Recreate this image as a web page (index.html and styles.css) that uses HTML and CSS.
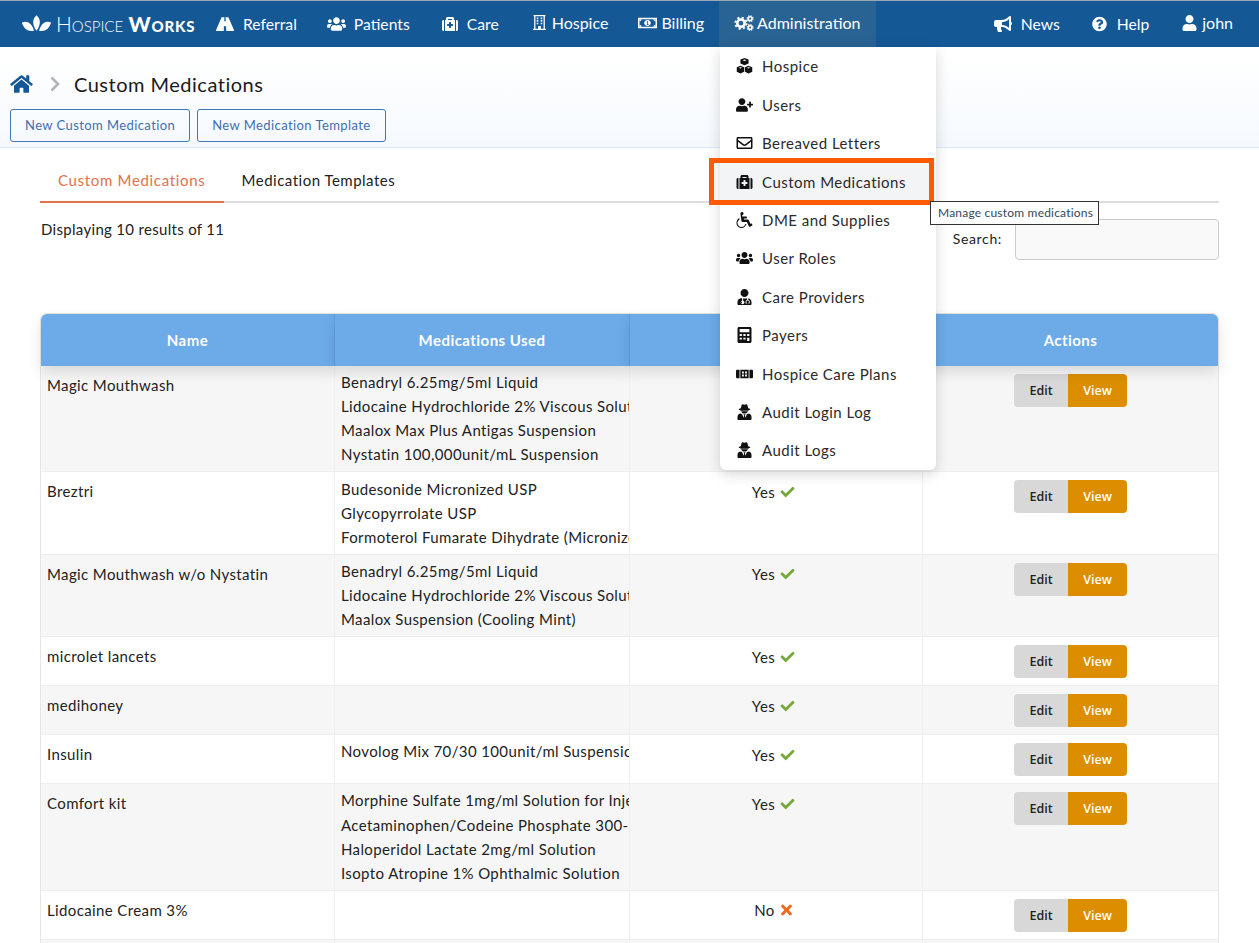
FILE: index.html
```html
<!DOCTYPE html>
<html lang="en">
<head>
<meta charset="utf-8">
<title>Custom Medications</title>
<link rel="stylesheet" href="styles.css">
</head>
<body>
<svg class="defs" width="0" height="0" aria-hidden="true">
  <defs>
    <symbol id="i-home" viewBox="0 0 576 512"><path d="M280.37 148.26L96 300.11V464a16 16 0 0 0 16 16l112.06-.29a16 16 0 0 0 15.92-16V368a16 16 0 0 1 16-16h64a16 16 0 0 1 16 16v95.64a16 16 0 0 0 16 16.05L464 480a16 16 0 0 0 16-16V300L295.67 148.26a12.19 12.19 0 0 0-15.3 0zM571.6 251.47L488 182.56V44.05a12 12 0 0 0-12-12h-56a12 12 0 0 0-12 12v72.61L318.47 43a48 48 0 0 0-61 0L4.34 251.47a12 12 0 0 0-1.6 16.9l25.5 31A12 12 0 0 0 45.15 301l235.22-193.74a12.19 12.19 0 0 1 15.3 0L530.9 301a12 12 0 0 0 16.9-1.6l25.5-31a12 12 0 0 0-1.7-16.93z"/></symbol>
    <symbol id="i-check" viewBox="0 0 512 512"><path d="M173.898 439.404l-166.4-166.4c-9.997-9.997-9.997-26.206 0-36.204l36.203-36.204c9.997-9.998 26.207-9.998 36.204 0L192 312.69 432.095 72.596c9.997-9.997 26.207-9.997 36.204 0l36.203 36.204c9.997 9.997 9.997 26.206 0 36.204l-294.4 294.401c-9.998 9.997-26.207 9.997-36.204-.001z"/></symbol>
    <symbol id="i-times" viewBox="0 0 352 512"><path d="M242.72 256l100.07-100.07c12.28-12.28 12.28-32.19 0-44.48l-22.24-22.24c-12.28-12.28-32.19-12.28-44.48 0L176 189.28 75.93 89.21c-12.28-12.28-32.19-12.28-44.48 0L9.21 111.45c-12.28 12.28-12.28 32.19 0 44.48L109.28 256 9.21 356.07c-12.28 12.28-12.28 32.19 0 44.48l22.24 22.24c12.28 12.28 32.2 12.28 44.48 0L176 322.72l100.07 100.07c12.28 12.28 32.2 12.28 44.48 0l22.24-22.24c12.28-12.28 12.28-32.19 0-44.48L242.72 256z"/></symbol>
    <symbol id="i-user" viewBox="0 0 448 512"><path d="M224 256c70.7 0 128-57.3 128-128S294.7 0 224 0 96 57.3 96 128s57.3 128 128 128zm89.6 32h-16.7c-22.2 10.2-46.9 16-72.9 16s-50.6-5.8-72.9-16h-16.7C60.2 288 0 348.2 0 422.4V464c0 26.5 21.5 48 48 48h352c26.5 0 48-21.5 48-48v-41.6c0-74.2-60.2-134.4-134.4-134.4z"/></symbol>
    <symbol id="i-users" viewBox="0 0 640 512"><path d="M96 224c35.3 0 64-28.7 64-64s-28.7-64-64-64-64 28.7-64 64 28.7 64 64 64zm448 0c35.3 0 64-28.7 64-64s-28.7-64-64-64-64 28.7-64 64 28.7 64 64 64zm32 32h-64c-17.6 0-33.5 7.1-45.1 18.6 40.3 22.1 68.9 62 75.1 109.4h66c17.7 0 32-14.3 32-32v-32c0-35.3-28.7-64-64-64zm-256 0c61.9 0 112-50.1 112-112S381.9 32 320 32 208 82.1 208 144s50.1 112 112 112zm76.8 32h-8.3c-20.8 10-43.9 16-68.5 16s-47.6-6-68.5-16h-8.3C179.6 288 128 339.6 128 403.2V432c0 26.5 21.5 48 48 48h288c26.5 0 48-21.5 48-48v-28.8c0-63.6-51.6-115.2-115.2-115.2zm-223.7-13.4C161.5 263.1 145.6 256 128 256H64c-35.3 0-64 28.7-64 64v32c0 17.7 14.3 32 32 32h65.9c6.3-47.4 34.9-87.3 75.2-109.4z"/></symbol>
    <symbol id="i-help" viewBox="0 0 512 512"><path d="M504 256c0 136.997-111.043 248-248 248S8 392.997 8 256C8 119.083 119.043 8 256 8s248 111.083 248 248zM262.655 90c-54.497 0-89.255 22.957-116.549 63.758-3.536 5.286-2.353 12.415 2.715 16.258l34.699 26.31c5.205 3.947 12.621 3.008 16.665-2.122 17.864-22.658 30.113-35.797 57.303-35.797 20.429 0 45.698 13.148 45.698 32.958 0 14.976-12.363 22.667-32.534 33.976C247.128 238.528 216 254.941 216 296v4c0 6.627 5.373 12 12 12h56c6.627 0 12-5.373 12-12v-1.333c0-28.462 83.186-29.647 83.186-106.667 0-58.002-60.165-102-116.531-102zM256 338c-25.365 0-46 20.635-46 46 0 25.364 20.635 46 46 46s46-20.636 46-46c0-25.365-20.635-46-46-46z"/></symbol>
    <symbol id="i-bullhorn" viewBox="0 0 576 512"><path d="M576 240c0-23.63-12.95-44.04-32-55.12V32.01C544 23.26 537.02 0 512 0c-7.12 0-14.19 2.38-19.98 7.02l-85.03 68.03C364.28 109.19 310.66 128 256 128H64c-35.35 0-64 28.65-64 64v96c0 35.35 28.65 64 64 64h33.7c-1.39 10.48-2.18 21.14-2.18 32 0 39.77 9.26 77.35 25.56 110.94 5.19 10.69 16.52 17.06 28.4 17.06h74.28c26.05 0 41.69-29.84 25.9-50.56-16.4-21.52-26.15-48.36-26.15-77.44 0-11.11 1.62-21.79 4.41-32H256c54.66 0 108.28 18.81 150.98 52.95l85.03 68.03a32.023 32.023 0 0 0 19.98 7.02c24.92 0 32-22.78 32-32V295.13C563.05 284.04 576 263.63 576 240zm-96 141.42l-33.05-26.44C392.95 311.78 325.12 288 256 288v-96c69.12 0 136.95-23.78 190.95-66.98L480 98.58v282.84z"/></symbol>
    <symbol id="i-userplus" viewBox="0 0 640 512"><path d="M624 208h-64v-64c0-8.8-7.2-16-16-16h-32c-8.8 0-16 7.2-16 16v64h-64c-8.8 0-16 7.2-16 16v32c0 8.8 7.2 16 16 16h64v64c0 8.8 7.2 16 16 16h32c8.8 0 16-7.2 16-16v-64h64c8.8 0 16-7.2 16-16v-32c0-8.8-7.2-16-16-16zm-400 48c70.7 0 128-57.3 128-128S294.7 0 224 0 96 57.3 96 128s57.3 128 128 128zm89.6 32h-16.7c-22.2 10.2-46.9 16-72.9 16s-50.6-5.8-72.9-16h-16.7C60.2 288 0 348.2 0 422.4V464c0 26.5 21.5 48 48 48h352c26.5 0 48-21.5 48-48v-41.6c0-74.2-60.2-134.4-134.4-134.4z"/></symbol>
    <symbol id="i-envelope" viewBox="0 0 512 512"><path d="M464 64H48C21.49 64 0 85.49 0 112v288c0 26.51 21.49 48 48 48h416c26.51 0 48-21.49 48-48V112c0-26.51-21.49-48-48-48zm0 48v40.805c-22.422 18.259-58.168 46.651-134.587 106.49-16.841 13.247-50.201 45.072-73.413 44.701-23.208.375-56.579-31.459-73.413-44.701C106.18 199.465 70.425 171.067 48 152.805V112h416zM48 400V214.398c22.914 18.251 55.409 43.862 104.938 82.646 21.857 17.205 60.134 55.186 103.062 54.955 42.717.231 80.509-37.199 103.053-54.947 49.528-38.783 82.032-64.401 104.947-82.653V400H48z"/></symbol>
    <symbol id="i-medkit" viewBox="0 0 512 512"><path fill-rule="evenodd" d="M96 480h320V128h-32V80c0-26.51-21.49-48-48-48H176c-26.51 0-48 21.49-48 48v48H96v352zm96-384h128v32H192V96zM352 272v32c0 8.837-7.163 16-16 16h-48v48c0 8.837-7.163 16-16 16h-32c-8.837 0-16-7.163-16-16v-48h-48c-8.837 0-16-7.163-16-16v-32c0-8.837 7.163-16 16-16h48v-48c0-8.837 7.163-16 16-16h32c8.837 0 16 7.163 16 16v48h48c8.837 0 16 7.163 16 16z"/><path d="M512 176v256c0 26.51-21.49 48-48 48h-16V128h16c26.51 0 48 21.49 48 48zM64 480H48c-26.51 0-48-21.49-48-48V176c0-26.51 21.49-48 48-48h16v352z"/></symbol>
    <symbol id="i-road" viewBox="0 0 576 512"><path fill-rule="evenodd" d="M192 40h78l-7 130h50l-7-130h78c8 0 14 4 17 11l174 400c5 12-4 25-17 25H328l-6-146h-68l-6 146H19c-13 0-22-13-17-25L175 51c3-7 9-11 17-11z"/></symbol>
    <symbol id="i-building" viewBox="0 0 448 512"><path fill-rule="evenodd" d="M20 0h408v44h-20v424h40v44H0v-44h40V44H20V0zm64 44v424h90v-74c0-10 8-18 18-18h64c10 0 18 8 18 18v74h90V44H84zm44 40h56v56h-56V84zm136 0h56v56h-56V84zm-136 90h56v56h-56v-56zm136 0h56v56h-56v-56zm-136 90h56v56h-56v-56zm136 0h56v56h-56v-56z"/></symbol>
    <symbol id="i-money" viewBox="0 0 640 512"><path fill-rule="evenodd" d="M0 80h640v352H0V80zm50 50v252h540V130H50zm270 26c62 0 112 45 112 100s-50 100-112 100-112-45-112-100 50-100 112-100zM296 200v32h16v70h-16v24h60v-24h-16V200h-44z"/><path d="M50 130h70c0 40-30 70-70 70v-70zm540 0v70c-40 0-70-30-70-70h70zM50 382v-70c40 0 70 30 70 70H50zm540 0h-70c0-40 30-70 70-70v70z"/></symbol>
    <symbol id="i-cogs" viewBox="0 0 640 512">
      <circle cx="222" cy="262" r="118" fill="none" stroke="currentColor" stroke-width="84"/>
      <circle cx="222" cy="262" r="182" fill="none" stroke="currentColor" stroke-width="56" stroke-dasharray="72 71"/>
      <circle cx="516" cy="118" r="60" fill="none" stroke="currentColor" stroke-width="50"/>
      <circle cx="516" cy="118" r="96" fill="none" stroke="currentColor" stroke-width="34" stroke-dasharray="38 37.4"/>
      <circle cx="516" cy="400" r="60" fill="none" stroke="currentColor" stroke-width="50"/>
      <circle cx="516" cy="400" r="96" fill="none" stroke="currentColor" stroke-width="34" stroke-dasharray="38 37.4"/>
    </symbol>
    <symbol id="i-cubes" viewBox="0 0 512 512">
      <path fill-rule="evenodd" d="M256 0l130 48v124l-130 56-130-56V48L256 0zm0 46l-66 24 66 26 66-26-66-24zM126 248l118 48v140l-118 56L8 436V296l118-48zm0 44l-60 22 60 24 60-24-60-22zM386 248l118 48v140l-118 56-118-56V296l118-48zm0 44l-60 22 60 24 60-24-60-22z"/>
    </symbol>
    <symbol id="i-wheelchair" viewBox="0 0 512 512"><path d="M496.1 385.2l14.2 28.7c3.9 7.9.7 17.5-7.2 21.400l-65.5 32.900c-16.300 8.200-36 1.300-43.600-15.200L331.200 320H192c-15.900 0-29.400-11.700-31.700-27.500L126 54c-4-30 19-54 50-54 28 0 50 22 50 50 0 26-20 47-45 50l5 40h130c8.800 0 16 7.200 16 16v32c0 8.800-7.200 16-16 16H236l5 32h122c12.500 0 23.800 7.200 29 18.600l58 125.800 24.600-13.100c7.900-4 17.600-.8 21.500 7.300zM316.900 384h-35.100C266.300 438.100 216.400 480 160 480c-70.600 0-128-57.400-128-128 0-47.200 25.700-88.500 63.800-110.700l-6.900-48.600C36.900 216.400 0 280 0 352c0 88.200 71.800 160 160 160 68.600 0 127.300-43.400 156.900-128z"/></symbol>
    <symbol id="i-usermd" viewBox="0 0 448 512"><path fill-rule="evenodd" d="M224 256c70.700 0 128-57.300 128-128S294.700 0 224 0 96 57.300 96 128s57.300 128 128 128zM104 296C46 306 0 358 0 422v58c0 18 14 32 32 32h384c18 0 32-14 32-32v-58c0-64-46-116-104-126v50c28 7 48 32 48 62v40c0 8-6 16-16 16h-32v-26h22v-30c0-22-18-40-40-40s-40 18-40 40v30h22v26h-32c-10 0-16-8-16-16v-40c0-30 20-55 48-62v-50c-20 6-40 8-64 8s-44-2-64-8v82c23 7 40 28 40 52 0 31-25 56-56 56s-56-25-56-56c0-24 17-45 40-52v-82zm16 114a24 24 0 1 0 0 48 24 24 0 0 0 0-48z"/></symbol>
    <symbol id="i-calc" viewBox="0 0 448 512"><path fill-rule="evenodd" d="M48 0h352c26.500 0 48 21.500 48 48v416c0 26.500-21.500 48-48 48H48c-26.500 0-48-21.500-48-48V48C0 21.500 21.500 0 48 0zm20 64v100h312V64H68zm0 160v60h72v-60H68zm120 0v60h72v-60h-72zm120 0v60h72v-60h-72zM68 340v60h72v-60H68zm120 0v60h72v-60h-72zm120 0v108h72V340h-72z"/></symbol>
    <symbol id="i-plan" viewBox="0 0 640 512"><path fill-rule="evenodd" d="M48 96h86v320H48c-26.500 0-48-21.500-48-48V144c0-26.500 21.500-48 48-48zm116 0h312v320H164V96zm342 0h86c26.500 0 48 21.500 48 48v224c0 26.500-21.500 48-48 48h-86V96zM228 160v76h68v-76h-68zm116 0v76h68v-76h-68zM228 276v76h68v-76h-68zm116 0v76h68v-76h-68z"/></symbol>
    <symbol id="i-secret" viewBox="0 0 448 512"><path fill-rule="evenodd" d="M130 40c4-20 20-36 36-36 18 0 36 16 58 16s40-16 58-16c16 0 32 16 36 36l26 94c38 8 66 20 66 32 0 10-20 20-50 28 0 8 0 14-2 22h-268c-2-8-2-14-2-22-30-8-50-18-50-28 0-12 28-24 66-32l26-94zM116 232h216c-10 42-52 74-108 74s-98-32-108-74zM88 300l62 28 42 110 20-82-26-26h76l-26 26 20 82 42-110 62-28c62 6 88 60 88 116v64c0 18-14 32-32 32H32c-18 0-32-14-32-32v-64c0-56 26-110 88-116z"/></symbol>
  </defs>
</svg>

<header class="navbar">
  <a class="brand">
    <svg class="brand-mark" viewBox="0 0 56 32" aria-hidden="true">
      <path d="M28 0c8 7 9 18 0 30-9-12-8-23 0-30z"/>
      <path d="M0 14c9-4 19 0 23 16C11 32 3 26 0 14z"/>
      <path d="M56 14c-9-4-19 0-23 16 12 2 20-4 23-16z"/>
    </svg>
    <span class="brand-text"><span class="brand-light">Hospice</span> <span class="brand-bold">Works</span></span>
  </a>
  <a class="nav-item ni-referral"><svg class="ic"><use href="#i-road"/></svg><span>Referral</span></a>
  <a class="nav-item ni-patients"><svg class="ic"><use href="#i-users"/></svg><span>Patients</span></a>
  <a class="nav-item ni-care"><svg class="ic"><use href="#i-medkit"/></svg><span>Care</span></a>
  <a class="nav-item ni-hospice up"><svg class="ic"><use href="#i-building"/></svg><span>Hospice</span></a>
  <a class="nav-item ni-billing up"><svg class="ic"><use href="#i-money"/></svg><span>Billing</span></a>
  <a class="nav-item ni-admin up is-open"><svg class="ic"><use href="#i-cogs"/></svg><span>Administration</span></a>
  <div class="nav-right">
    <a class="nav-item ni-news"><svg class="ic"><use href="#i-bullhorn"/></svg><span>News</span></a>
    <a class="nav-item ni-help"><svg class="ic"><use href="#i-help"/></svg><span>Help</span></a>
    <a class="nav-item ni-john up"><svg class="ic"><use href="#i-user"/></svg><span>john</span></a>
  </div>
</header>

<section class="subheader">
  <div class="crumbs">
    <svg class="crumb-home"><use href="#i-home"/></svg>
    <svg class="crumb-sep" viewBox="0 0 10 16" aria-hidden="true"><path d="M1.500 1.500L8 8l-6.500 6.500"/></svg>
    <h1 class="page-title">Custom Medications</h1>
  </div>
  <div class="sub-actions">
    <button class="btn-outline">New Custom Medication</button>
    <button class="btn-outline">New Medication Template</button>
  </div>
</section>

<main class="content">
  <nav class="tabs">
    <a class="tab is-active">Custom Medications</a>
    <a class="tab tab-plain">Medication Templates</a>
  </nav>
  <div class="table-tools">
    <div class="results">Displaying 10 results of 11</div>
    <label class="search"><span>Search:</span><input class="search-input" type="text"></label>
  </div>

  <table class="med-table">
    <colgroup><col class="c1"><col class="c2"><col class="c3"><col class="c4"></colgroup>
    <thead>
      <tr><th>Name</th><th>Medications Used</th><th></th><th>Actions</th></tr>
    </thead>
    <tbody>
      <tr>
        <td class="name">Magic Mouthwash</td>
        <td class="meds"><div>Benadryl 6.25mg/5ml Liquid</div><div>Lidocaine Hydrochloride 2% Viscous Solution</div><div>Maalox Max Plus Antigas Suspension</div><div>Nystatin 100,000unit/mL Suspension</div></td>
        <td class="status"></td>
        <td class="actions"><div class="btn-group"><button class="btn-edit">Edit</button><button class="btn-view">View</button></div></td>
      </tr>
      <tr>
        <td class="name">Breztri</td>
        <td class="meds"><div>Budesonide Micronized USP</div><div>Glycopyrrolate USP</div><div>Formoterol Fumarate Dihydrate (Micronized)</div></td>
        <td class="status"><span class="status-in">Yes <svg class="yes"><use href="#i-check"/></svg></span></td>
        <td class="actions"><div class="btn-group"><button class="btn-edit">Edit</button><button class="btn-view">View</button></div></td>
      </tr>
      <tr>
        <td class="name">Magic Mouthwash w/o Nystatin</td>
        <td class="meds"><div>Benadryl 6.25mg/5ml Liquid</div><div>Lidocaine Hydrochloride 2% Viscous Solution</div><div>Maalox Suspension (Cooling Mint)</div></td>
        <td class="status"><span class="status-in">Yes <svg class="yes"><use href="#i-check"/></svg></span></td>
        <td class="actions"><div class="btn-group"><button class="btn-edit">Edit</button><button class="btn-view">View</button></div></td>
      </tr>
      <tr>
        <td class="name">microlet lancets</td>
        <td class="meds"></td>
        <td class="status"><span class="status-in">Yes <svg class="yes"><use href="#i-check"/></svg></span></td>
        <td class="actions"><div class="btn-group"><button class="btn-edit">Edit</button><button class="btn-view">View</button></div></td>
      </tr>
      <tr>
        <td class="name">medihoney</td>
        <td class="meds"></td>
        <td class="status"><span class="status-in">Yes <svg class="yes"><use href="#i-check"/></svg></span></td>
        <td class="actions"><div class="btn-group"><button class="btn-edit">Edit</button><button class="btn-view">View</button></div></td>
      </tr>
      <tr>
        <td class="name">Insulin</td>
        <td class="meds"><div>Novolog Mix 70/30 100unit/ml Suspension</div></td>
        <td class="status"><span class="status-in">Yes <svg class="yes"><use href="#i-check"/></svg></span></td>
        <td class="actions"><div class="btn-group"><button class="btn-edit">Edit</button><button class="btn-view">View</button></div></td>
      </tr>
      <tr>
        <td class="name">Comfort kit</td>
        <td class="meds"><div>Morphine Sulfate 1mg/ml Solution for Injection</div><div>Acetaminophen/Codeine Phosphate 300-30mg</div><div>Haloperidol Lactate 2mg/ml Solution</div><div>Isopto Atropine 1% Ophthalmic Solution</div></td>
        <td class="status"><span class="status-in">Yes <svg class="yes"><use href="#i-check"/></svg></span></td>
        <td class="actions"><div class="btn-group"><button class="btn-edit">Edit</button><button class="btn-view">View</button></div></td>
      </tr>
      <tr>
        <td class="name">Lidocaine Cream 3%</td>
        <td class="meds"></td>
        <td class="status"><span class="status-in">No <svg class="no"><use href="#i-times"/></svg></span></td>
        <td class="actions"><div class="btn-group"><button class="btn-edit">Edit</button><button class="btn-view">View</button></div></td>
      </tr>
      <tr>
        <td class="name"></td><td class="meds"></td><td class="status"></td>
        <td class="actions"></td>
      </tr>
    </tbody>
  </table>
</main>

<ul class="dropdown">
  <li class="dd-item"><svg class="dd-ic"><use href="#i-cubes"/></svg>Hospice</li>
  <li class="dd-item"><svg class="dd-ic"><use href="#i-userplus"/></svg>Users</li>
  <li class="dd-item"><svg class="dd-ic"><use href="#i-envelope"/></svg>Bereaved Letters</li>
  <li class="dd-item is-hover"><svg class="dd-ic"><use href="#i-medkit"/></svg>Custom Medications</li>
  <li class="dd-item"><svg class="dd-ic"><use href="#i-wheelchair"/></svg>DME and Supplies</li>
  <li class="dd-item"><svg class="dd-ic"><use href="#i-users"/></svg>User Roles</li>
  <li class="dd-item"><svg class="dd-ic"><use href="#i-usermd"/></svg>Care Providers</li>
  <li class="dd-item"><svg class="dd-ic"><use href="#i-calc"/></svg>Payers</li>
  <li class="dd-item"><svg class="dd-ic"><use href="#i-plan"/></svg>Hospice Care Plans</li>
  <li class="dd-item"><svg class="dd-ic"><use href="#i-secret"/></svg>Audit Login Log</li>
  <li class="dd-item"><svg class="dd-ic"><use href="#i-secret"/></svg>Audit Logs</li>
</ul>
<div class="highlight"></div>
<div class="tooltip">Manage custom medications</div>
</body>
</html>
```

FILE: styles.css
```css
* { box-sizing: border-box; }
html, body { margin: 0; padding: 0; height: 943px; overflow: hidden; }
body {
  position: relative;
  font-family: Lato, "Open Sans", sans-serif;
  font-size: 15px;
  letter-spacing: .38px;
  color: #222;
  background: #fff;
}
.defs { position: absolute; }

/* Navbar */
.navbar {
  display: flex;
  align-items: stretch;
  height: 47px;
  background: #145896;
  border-top: 1px solid #9aa7b5;
  color: #fff;
  font-size: 15.7px;
  letter-spacing: 0;
}
.brand {
  display: flex;
  align-items: center;
  gap: 6px;
  width: 201px;
  padding: 0 0 2px 22px;
  flex: none;
}
.brand-mark { width: 29px; height: 17px; fill: #fff; flex: none; }
.brand-text { font-size: 21px; font-variant: small-caps; white-space: nowrap; margin-left: -1px; }
.brand-light { font-weight: 300; }
.brand-bold { font-weight: 900; letter-spacing: .8px; }
.nav-item {
  display: flex;
  align-items: center;
  gap: 8px;
  padding: 0 15px;
  white-space: nowrap;
  color: #fff;
  fill: #fff;
}
.nav-item.up { padding-bottom: 3px; font-size: 16px; }
.nav-item .ic { width: 18px; height: 16px; flex: none; fill: currentColor; }
.ni-patients .ic { width: 19px; }
.ni-referral { gap: 9px; }
.ni-care { margin-left: 2px; gap: 9px; }
.ni-care .ic { width: 16px; }
.ni-hospice { margin-left: 4px; gap: 6px; }
.ni-hospice .ic { width: 13px; height: 17px; }
.ni-billing { gap: 4px; }
.ni-billing .ic { width: 19px; }
.ni-admin { gap: 3px; }
.ni-admin .ic { width: 20px; }
.is-open { background: #296394; }
.nav-right { display: flex; margin-left: auto; padding-right: 11px; }
.ni-news { gap: 9px; }
.ni-help { gap: 10px; margin-left: 2px; }
.ni-help .ic { width: 15px; }
.ni-john { gap: 5px; margin-left: 3px; }
.ni-john .ic { width: 15px; }

/* Subheader */
.subheader {
  height: 101px;
  padding: 0 10px;
  background: linear-gradient(#fff 10%, #f5f9fe);
  border-bottom: 1px solid #dce9f7;
}
.crumbs { display: flex; align-items: center; height: 62px; padding-top: 12px; }
.crumb-home { width: 23px; height: 20px; fill: #145896; flex: none; }
.crumb-sep { width: 10px; height: 16px; margin: 0 14px 0 17px; fill: none; stroke: #b4b4b4; stroke-width: 2.6; flex: none; }
.page-title { margin: 0; font-size: 20px; font-weight: 400; letter-spacing: .5px; color: #1a1a1a; }
.sub-actions { display: flex; gap: 7px; }
.btn-outline {
  height: 33px;
  padding: 0 14px 2px;
  font: 400 13px Lato, sans-serif;
  letter-spacing: .42px;
  color: #3f6fae;
  background: transparent;
  border: 1px solid #3f78b8;
  border-radius: 3px;
}

/* Content */
.content { padding: 0 40px; }
.tabs { display: flex; height: 55px; border-bottom: 2px solid #ddd; }
.tab { display: flex; align-items: center; padding: 11px 18px 0; margin-bottom: -2px; border-bottom: 2px solid transparent; }
.tab.is-active { color: #e0734a; border-bottom-color: #e0734a; letter-spacing: .68px; }
.tab-plain { letter-spacing: .5px; }
.table-tools { display: flex; justify-content: space-between; height: 110px; padding-top: 16px; }
.results { padding: 1px 0 0 1px; letter-spacing: .31px; }
.search { display: flex; align-items: flex-start; gap: 13px; }
.search span { padding-top: 11px; font-size: 14px; letter-spacing: .65px; }
.search-input { width: 204px; height: 41px; background: #f9f9f9; border: 1px solid #ccc; border-radius: 4px; }

/* Table */
.med-table {
  width: 100%;
  table-layout: fixed;
  border-collapse: separate;
  border-spacing: 0;
  border: 1px solid #e6e6e6;
  border-bottom: 0;
  border-radius: 6px 6px 0 0;
}
.c1 { width: 294px; }
.c2 { width: 295px; }
.c3 { width: 293px; }
th {
  position: relative;
  height: 52px;
  padding-bottom: 1px;
  background: #6caae8;
  color: #fff;
  font-weight: 700;
  font-size: 15px;
  letter-spacing: .45px;
  border-right: 1px solid #639fdc;
  box-shadow: 0 6px 14px rgba(0,0,0,.12);
}
th:first-child { border-top-left-radius: 6px; }
th:last-child { border-top-right-radius: 6px; border-right: 0; }
td {
  vertical-align: top;
  padding: 0 6px;
  border-bottom: 1px solid #eee;
  border-right: 1px solid #f0f0f0;
  white-space: nowrap;
  overflow: hidden;
}
td:last-child { border-right: 0; }
tbody tr:nth-child(odd) td { background: #f6f6f6; }
td.name { padding-top: 10px; }
td.meds { padding: 4.250px 0 5px 6px; line-height: 24.050px; }
td.status { padding-top: 7.500px; text-align: center; }
.status-in { display: inline-flex; align-items: center; gap: 5px; margin-left: -5px; line-height: 24px; }
.yes { width: 15px; height: 14px; fill: #76a83c; }
.no { width: 13px; height: 16px; fill: #f2691e; }
td.actions { padding: 8px 0 7px; text-align: center; }
.btn-group { display: inline-flex; vertical-align: top; }
.btn-edit, .btn-view {
  height: 33px;
  border: 0;
  letter-spacing: 0;
  font: 600 12.5px "Open Sans", sans-serif;
}
.btn-edit { width: 54px; background: #d8d8d8; color: #222; border-radius: 4px 0 0 4px; }
.btn-view { width: 59px; background: #dc8e00; color: #fff; border-radius: 0 4px 4px 0; }

/* Overlays */
.dropdown {
  position: absolute;
  left: 720px;
  top: 47px;
  width: 216px;
  margin: 0;
  padding: .200px 0 .500px;
  list-style: none;
  background: #fff;
  border-radius: 0 0 6px 6px;
  box-shadow: 0 4px 14px rgba(0,0,0,.16);
  letter-spacing: .48px;
}
.dd-item {
  display: flex;
  align-items: center;
  gap: 9px;
  height: 38.400px;
  padding-left: 16px;
  color: #2a2a2a;
  white-space: nowrap;
}
.dd-item.is-hover { background: #f3f4f6; }
.dd-ic { width: 17px; height: 16px; fill: #111; flex: none; }
.highlight {
  position: absolute;
  left: 709px;
  top: 158px;
  width: 225px;
  height: 47px;
  border: 5px solid #ff5a00;
}
.tooltip {
  position: absolute;
  left: 930px;
  top: 201px;
  width: 169px;
  height: 24px;
  padding-left: 7px;
  line-height: 22px;
  font-size: 12px;
  letter-spacing: .2px;
  color: #33475b;
  background: #fff;
  border: 1px solid #333;
  white-space: nowrap;
}
```
